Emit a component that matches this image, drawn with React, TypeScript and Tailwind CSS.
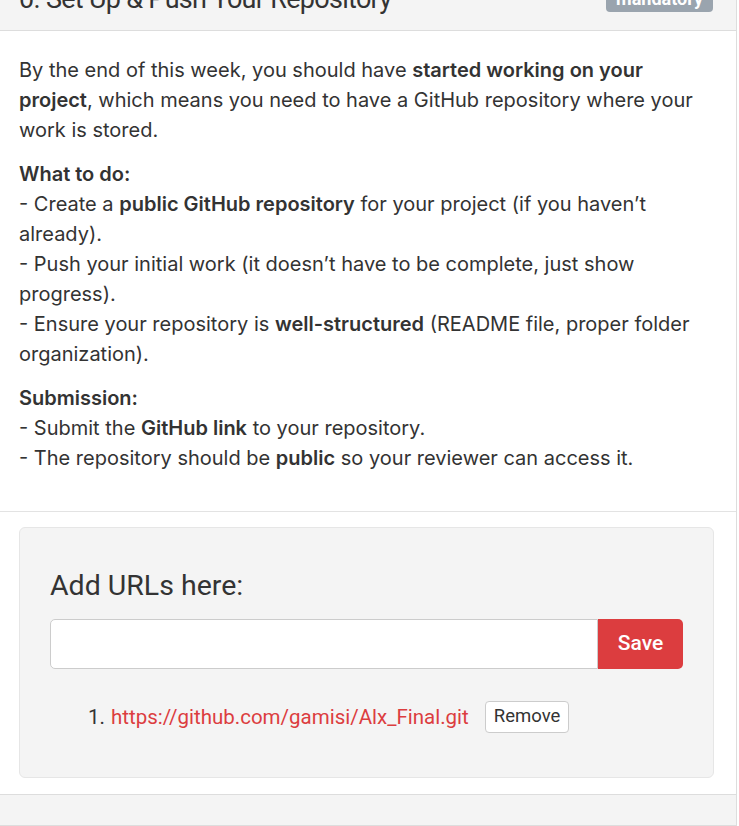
export default function App() {
  return (
    <div className="min-h-screen bg-white">
      <div className="w-[737px] border-r border-b border-[#dddddd] bg-white">
        {/* header */}
        <div className="h-[31px] bg-[#f4f4f4] border-b border-[#dddddd] flex justify-between items-start px-[19px]">
          <h3 className="font-[family-name:Roboto] text-[27px] leading-[30px] text-[#333] -mt-[16px] tracking-[-0.7px]">
            0. Set Up &amp; Push Your Repository
          </h3>
          <span className="-mt-[14px] mr-[4px] bg-[#9aa4ae] text-white font-[family-name:Roboto] font-bold text-[18px] leading-[26px] px-[10px] rounded-[4px]">
            mandatory
          </span>
        </div>

        {/* body */}
        <div className="pl-[19px] pr-[36px] pt-[24px] pb-[38px] font-[family-name:Inter] text-[20px] leading-[30px] text-[#333] border-b border-[#e3e3e3]">
          <p>
            By the end of this week, you should have <b className="font-semibold">started working on your project</b>, which means you need to have a GitHub repository where your work is stored.
          </p>
          <p className="mt-[14px]">
            <b className="font-semibold">What to do:</b>
            <br />- Create a <b className="font-semibold">public GitHub repository</b> for your project (if you haven’t already).
            <br />- Push your initial work (it doesn’t have to be complete, just show progress).
            <br />- Ensure your repository is <b className="font-semibold">well-structured</b> (README file, proper folder organization).
          </p>
          <p className="mt-[14px]">
            <b className="font-semibold">Submission:</b>
            <br />- Submit the <b className="font-semibold">GitHub link</b> to your repository.
            <br />- The repository should be <b className="font-semibold">public</b> so your reviewer can access it.
          </p>
        </div>

        {/* url box */}
        <div className="pl-[19px] pr-[22px] pt-[15px] pb-[16px]">
          <div className="bg-[#f4f4f4] border border-[#e6e6e6] rounded-[6px] px-[30px] pt-[42px] pb-[44px] font-[family-name:Roboto]">
            <h4 className="text-[28.5px] leading-[32px] text-[#333]">Add URLs here:</h4>
            <div className="mt-[17px] flex">
              <input className="w-[548px] h-[50px] bg-white border border-[#cccccc] rounded-l-[5px] px-3 outline-none" />
              <button className="w-[85px] h-[50px] bg-[#dc3d3f] text-white text-[21px] font-medium rounded-r-[5px]">Save</button>
            </div>
            <ol className="mt-[32px] pl-[60px] list-decimal text-[20.5px] text-[#333]">
              <li className="pl-[1px]">
                <div className="flex items-center">
                  <a className="text-[#dc3d3f]">https://github.com/gamisi/Alx_Final.git</a>
                  <button className="ml-[16px] h-[32px] px-[8px] bg-white border border-[#cccccc] rounded-[4px] text-[18.5px] text-[#333]">Remove</button>
                </div>
              </li>
            </ol>
          </div>
        </div>

        {/* footer */}
        <div className="h-[31px] bg-[#f4f4f4] border-t border-[#dddddd]" />
      </div>
    </div>
  )
}
